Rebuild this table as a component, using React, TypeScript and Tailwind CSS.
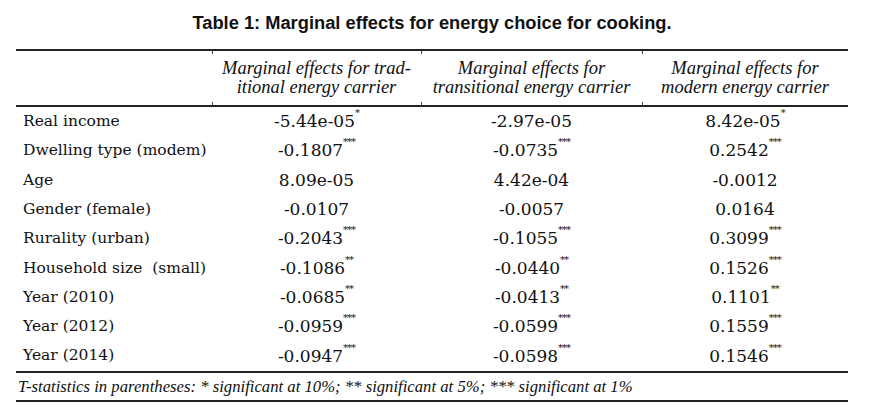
import React from 'react';

type Row = { label: string; values: [string, string][] };

const rows: Row[] = [
  { label: 'Real income', values: [['-5.44e-05', '*'], ['-2.97e-05', ''], ['8.42e-05', '*']] },
  { label: 'Dwelling type (modem)', values: [['-0.1807', '***'], ['-0.0735', '***'], ['0.2542', '***']] },
  { label: 'Age', values: [['8.09e-05', ''], ['4.42e-04', ''], ['-0.0012', '']] },
  { label: 'Gender (female)', values: [['-0.0107', ''], ['-0.0057', ''], ['0.0164', '']] },
  { label: 'Rurality (urban)', values: [['-0.2043', '***'], ['-0.1055', '***'], ['0.3099', '***']] },
  { label: 'Household size\u00a0 (small)', values: [['-0.1086', '**'], ['-0.0440', '**'], ['0.1526', '***']] },
  { label: 'Year (2010)', values: [['-0.0685', '**'], ['-0.0413', '**'], ['0.1101', '**']] },
  { label: 'Year (2012)', values: [['-0.0959', '***'], ['-0.0599', '***'], ['0.1559', '***']] },
  { label: 'Year (2014)', values: [['-0.0947', '***'], ['-0.0598', '***'], ['0.1546', '***']] },
];

const headers = [
  ['Marginal effects for trad-', 'itional energy carrier'],
  ['Marginal effects for', 'transitional energy carrier'],
  ['Marginal effects for', 'modern energy carrier'],
];

const cols = 'grid grid-cols-[196px_209px_221px_206px]';

function Tick({ bottom }: { bottom?: boolean }) {
  return (
    <span
      className={`absolute left-0 w-px h-[3px] bg-[#444] ${bottom ? 'bottom-0' : 'top-0'}`}
    />
  );
}

export default function App() {
  return (
    <div className="w-[877px] h-[418px] bg-white text-[#111]">
      <div className="ml-4 w-[832px]">
        <div className="h-[49px] pt-[12px] flex justify-center">
          <h1 className="text-[18.3px] leading-[22px] font-bold font-['Liberation_Sans',Arial,sans-serif]">
            Table 1: Marginal effects for energy choice for cooking.
          </h1>
        </div>

        <div className="border-t-2 border-[#222]" />

        <div className={`${cols} h-[54px] font-['Liberation_Serif',serif] italic text-[18.5px] leading-[19.5px]`}>
          <div />
          {headers.map((h, i) => (
            <div key={i} className="relative flex flex-col items-center justify-center">
              <Tick />
              <Tick bottom />
              <span>{h[0]}</span>
              <span>{h[1]}</span>
            </div>
          ))}
        </div>

        <div className="border-t-2 border-[#222]" />

        <div className="font-['DejaVu_Serif',serif]">
          {rows.map((r) => (
            <div key={r.label} className={`${cols} h-[29.3px] items-center`}>
              <div className="pl-[7px] text-[15.5px] whitespace-pre">{r.label}</div>
              {r.values.map(([v, s], i) => (
                <div key={i} className="text-center text-[17px] leading-none">
                  {v}
                  {s && <sup className="text-[10px] tracking-[-1px] align-[6px]">{s}</sup>}
                </div>
              ))}
            </div>
          ))}
        </div>

        <div className="border-t-2 border-[#222]" />

        <div className="h-[27px] pl-[2px] flex items-center font-['Liberation_Serif',serif] italic text-[16.7px]">
          T-statistics in parentheses: * significant at 10%; ** significant at 5%; *** significant at 1%
        </div>

        <div className="border-t-2 border-[#222]" />
      </div>
    </div>
  );
}
